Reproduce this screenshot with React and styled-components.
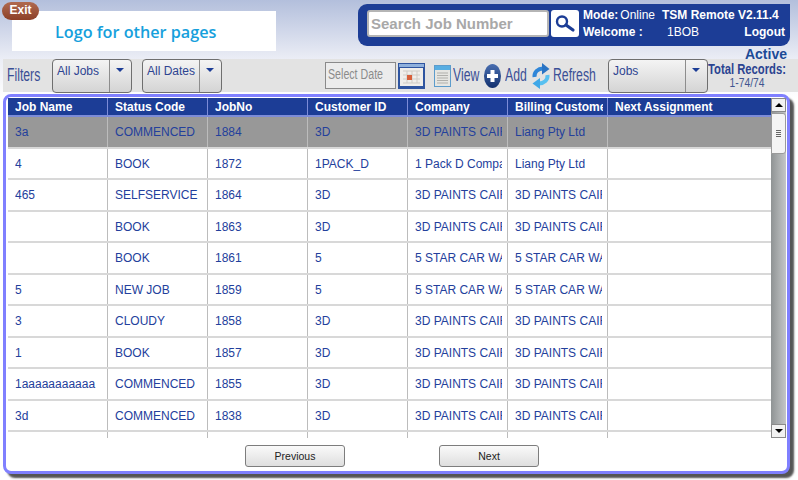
import React from 'react';
import styled, { createGlobalStyle } from 'styled-components';

const GlobalStyle = createGlobalStyle`
  html, body {
    margin: 0;
    padding: 0;
    width: 798px;
    height: 480px;
    overflow: hidden;
    background: #fff;
    font-family: "Liberation Sans", Arial, sans-serif;
  }
  * { box-sizing: border-box; }
`;

const Page = styled.div`
  position: relative;
  width: 798px;
  height: 480px;
  padding-top: 4px;
  background: linear-gradient(180deg, #b3bfdc 0%, #eceef6 60px, #fff 100px);
`;

const ExitBadge = styled.div`
  position: absolute;
  left: 2px;
  top: 2px;
  width: 37px;
  height: 18px;
  border-radius: 9px;
  background: linear-gradient(180deg, #b06a50, #8c4028);
  color: #fff;
  font-size: 12px;
  font-weight: 700;
  line-height: 17px;
  text-align: center;
`;

const TopBar = styled.div`
  display: flex;
  height: 55px;
  padding-right: 8px;
`;

const LogoBox = styled.div`
  width: 264px;
  height: 40px;
  margin: 7px 82px 0 12px;
  padding-left: 43px;
  background: #fff;
  color: #16a0dc;
  font-family: "Open Sans", sans-serif;
  font-size: 16.2px;
  font-weight: 600;
  line-height: 42px;
`;

const BluePanel = styled.div`
  display: flex;
  align-items: center;
  width: 432px;
  height: 42px;
  padding: 0 0 3px 9px;
  border-radius: 9px 0 9px 9px;
  background: #1c3d96;
  color: #fff;
`;

const SearchInput = styled.div`
  width: 182px;
  height: 27px;
  padding-left: 2px;
  border: 2px solid #b5b5b5;
  border-radius: 3px;
  background: #fff;
  color: #a8a8a8;
  font-size: 15px;
  font-weight: 700;
  line-height: 23px;
  white-space: nowrap;
`;

const SearchButton = styled.div`
  display: flex;
  align-items: center;
  justify-content: center;
  width: 28px;
  height: 27px;
  margin-left: 2px;
  border-radius: 3px;
  background: #fff;
`;

const InfoGrid = styled.div`
  display: grid;
  grid-template-columns: 79px 125px;
  grid-template-rows: 17px 17px;
  margin-left: 4px;
  font-size: 12px;
`;

const InfoCell = styled.div`
  display: flex;
  justify-content: ${p => (p.$between ? 'space-between' : 'flex-start')};
  align-items: center;
  gap: ${p => p.$gap || 0}px;
  font-weight: ${p => (p.$bold ? 700 : 400)};
  white-space: nowrap;
`;

const Light = styled.span`
  font-weight: 400;
  margin-left: ${p => p.$left || 0}px;
`;

const Strong = styled.span`
  font-weight: 700;
  margin-right: ${p => p.$right || 0}px;
`;

const FilterBar = styled.div`
  display: flex;
  align-items: center;
  height: 33px;
  margin-left: 3px;
  padding-left: 4px;
  background: #e3e3e3;
`;

// the original labels are a condensed face, squeezed here from Liberation Sans
const BarLabel = styled.span`
  flex: none;
  width: ${p => p.$width}px;
  margin-left: ${p => p.$left || 0}px;
  color: #3a4f96;
  font-size: 18px;
  white-space: nowrap;
  transform: scaleX(0.68);
  transform-origin: left center;
`;

const Dropdown = styled.div`
  display: flex;
  flex: none;
  width: ${p => p.$width}px;
  height: 34px;
  margin-left: ${p => p.$left}px;
  border: 1px solid #6f6f6f;
  border-radius: 4px;
  background: linear-gradient(180deg, #f4f4f4, #d4d4d4);
`;

const DropLabel = styled.div`
  flex: 1;
  padding: 4px 0 0 4px;
  border-right: 1px solid #8d8d8d;
  color: #2d4491;
  font-size: 12px;
  white-space: nowrap;
`;

const DropArrow = styled.div`
  width: 21px;
  padding: 8px 0 0 6px;
  &::after {
    content: '';
    display: block;
    width: 0;
    height: 0;
    border-left: 4px solid transparent;
    border-right: 4px solid transparent;
    border-top: 4px solid #1c3d96;
  }
`;

const DateInput = styled.div`
  flex: none;
  width: 71px;
  height: 27px;
  margin-left: 103px;
  padding-left: 2px;
  border: 1px solid #8a8a8a;
  background: #ececec;
`;

const DateText = styled.span`
  display: block;
  color: #8b8b8b;
  font-size: 14px;
  line-height: 23px;
  white-space: nowrap;
  transform: scaleX(0.76);
  transform-origin: left center;
`;

const IconSlot = styled.span`
  display: flex;
  flex: none;
  margin-left: ${p => p.$left || 0}px;
`;

const Totals = styled.div`
  position: relative;
  flex: none;
  width: 78px;
  line-height: 14px;
`;

const ActiveTag = styled.div`
  position: absolute;
  top: -15px;
  right: -1px;
  color: #1c4a96;
  font-size: 14px;
  font-weight: 700;
  line-height: 14px;
`;

const TotalLine = styled.div`
  display: flex;
  justify-content: center;
  color: ${p => (p.$muted ? '#41558f' : '#2b4491')};
  font-size: ${p => (p.$muted ? 13.5 : 15)}px;
  font-weight: ${p => (p.$muted ? 400 : 700)};
  white-space: nowrap;
  transform: scaleX(${p => (p.$muted ? 0.76 : 0.75)});
`;

const Card = styled.div`
  display: flex;
  flex-direction: column;
  width: 787px;
  height: 380px;
  margin: 2px 0 0 3px;
  padding: 1px 1px 0 2px;
  border: 3px solid #8080ff;
  border-radius: 8px;
  background: #fff;
  box-shadow: 4px 4px 2px #555;
`;

const TableWrap = styled.div`
  display: flex;
  height: 340px;
`;

const Table = styled.div`
  width: 764px;
  height: 340px;
  overflow: hidden;
`;

const Row = styled.div`
  display: grid;
  grid-template-columns: repeat(6, 100px) 164px;
  height: ${p => (p.$head ? 19 : 31.55)}px;
  background: ${p => (p.$head ? '#1c3d96' : p.$selected ? '#989898' : '#fff')};
  border-bottom: 2px solid ${p => (p.$head ? '#7c8cd8' : '#d8d8d8')};
`;

const Cell = styled.div`
  padding: ${p => (p.$head ? '2px 4px 0 7px' : '8px 5px 0 7px')};
  border-right: 1px solid ${p => (p.$head ? '#7c8cd8' : '#bcbcbc')};
  color: ${p => (p.$head ? '#fff' : '#23409c')};
  font-size: 12px;
  font-weight: ${p => (p.$head ? 700 : 400)};
  &:last-child { border-right: none; }
`;

const CellText = styled.div`
  overflow: hidden;
  white-space: nowrap;
`;

const ScrollBar = styled.div`
  display: flex;
  flex-direction: column;
  width: 15px;
  height: 340px;
  background: linear-gradient(90deg, #8f9394, #c4c6c7);
`;

const ScrollButton = styled.div`
  display: flex;
  align-items: center;
  justify-content: center;
  height: 14px;
  background: #f2f2f2;
  border: 1px solid #8a8a8a;
  &::after {
    content: '';
    border-left: 4px solid transparent;
    border-right: 4px solid transparent;
    ${p => (p.$up ? 'border-bottom: 4px solid #000;' : 'border-top: 4px solid #000;')}
  }
`;

const ScrollThumb = styled.div`
  display: flex;
  flex-direction: column;
  align-items: center;
  justify-content: center;
  gap: 1px;
  height: 41px;
  margin: 1px 0 auto;
  border: 1px solid #9a9a9a;
  border-radius: 0 3px 3px 0;
  background: #f4f4f4;
`;

const Grip = styled.i`
  display: block;
  width: 5px;
  height: 1px;
  background: #666;
`;

const Pager = styled.div`
  display: flex;
  gap: 94px;
  padding: 7px 0 0 237px;
`;

const PageButton = styled.div`
  width: 100px;
  height: 22px;
  border: 1px solid #7d7d7d;
  border-radius: 3px;
  background: linear-gradient(180deg, #fafafa, #dedede);
  color: #222;
  font-size: 10.5px;
  line-height: 20px;
  text-align: center;
`;

const columns = ['Job Name', 'Status Code', 'JobNo', 'Customer ID', 'Company', 'Billing Customer', 'Next Assignment'];

const rows = [
  ['3a', 'COMMENCED', '1884', '3D', '3D PAINTS CAIRNS', 'Liang Pty Ltd'],
  ['4', 'BOOK', '1872', '1PACK_D', '1 Pack D Company', 'Liang Pty Ltd'],
  ['465', 'SELFSERVICE', '1864', '3D', '3D PAINTS CAIRNS', '3D PAINTS CAIRNS'],
  ['', 'BOOK', '1863', '3D', '3D PAINTS CAIRNS', '3D PAINTS CAIRNS'],
  ['', 'BOOK', '1861', '5', '5 STAR CAR WASH', '5 STAR CAR WASH'],
  ['5', 'NEW JOB', '1859', '5', '5 STAR CAR WASH', '5 STAR CAR WASH'],
  ['3', 'CLOUDY', '1858', '3D', '3D PAINTS CAIRNS', '3D PAINTS CAIRNS'],
  ['1', 'BOOK', '1857', '3D', '3D PAINTS CAIRNS', '3D PAINTS CAIRNS'],
  ['1aaaaaaaaaaa', 'COMMENCED', '1855', '3D', '3D PAINTS CAIRNS', '3D PAINTS CAIRNS'],
  ['3d', 'COMMENCED', '1838', '3D', '3D PAINTS CAIRNS', '3D PAINTS CAIRNS'],
  ['', '', '', '', '', ''],
];

const SearchIcon = () => (
  <svg width="22" height="20" viewBox="0 0 22 20">
    <circle cx="8" cy="7.5" r="5" fill="none" stroke="#1c3d96" strokeWidth="2.4" />
    <path d="M12 11l7 5" stroke="#1c3d96" strokeWidth="3.2" strokeLinecap="round" />
  </svg>
);

const CalendarIcon = () => (
  <svg width="27" height="26" viewBox="0 0 27 26">
    <rect width="27" height="26" fill="#2f55a0" />
    <rect x="1" y="1" width="25" height="3" fill="#8fb0dc" />
    <rect x="2" y="5" width="23" height="18" fill="#f0eeea" />
    <path d="M5 8h17M5 12h17M5 16h17M5 20h17M9 8v12M14 8v12M19 8v12" stroke="#cfccc6" />
    <rect x="9" y="12" width="5" height="5" fill="#d8603a" />
  </svg>
);

const ViewIcon = () => (
  <svg width="17" height="22" viewBox="0 0 17 22">
    <rect x="0.5" y="0.5" width="16" height="21" fill="#e6e6e2" stroke="#5c9ccc" />
    <rect x="1" y="1" width="15" height="4" fill="#58aee2" />
    <path d="M3 8h11M3 10.5h11M3 13h11M3 15.5h11M3 18h11" stroke="#b0b0ac" strokeWidth="1.2" />
  </svg>
);

const AddIcon = () => (
  <svg width="17" height="24" viewBox="0 0 17 24">
    <defs>
      <linearGradient id="addFill" x1="0" y1="0" x2="0" y2="1">
        <stop offset="0" stopColor="#4a6fb0" />
        <stop offset="1" stopColor="#12306e" />
      </linearGradient>
    </defs>
    <ellipse cx="8.5" cy="12" rx="8.5" ry="12" fill="url(#addFill)" />
    <path d="M8.5 6v12M3 12h11" stroke="#fff" strokeWidth="4" />
  </svg>
);

const RefreshIcon = () => (
  <svg width="20" height="26" viewBox="0 0 20 26">
    <path d="M3.5 14C3 9 7 5.5 12 5.5" fill="none" stroke="#2f86d8" strokeWidth="4" />
    <path d="M11 0l7.5 6L11 11.5z" fill="#2a74c4" />
    <path d="M16.5 12c.5 5-3.5 8.5-8.5 8.5" fill="none" stroke="#58c0f0" strokeWidth="4" />
    <path d="M9 15L1.5 20.5 9 26z" fill="#3fa8e8" />
  </svg>
);

export default function App() {
  return (
    <Page>
      <GlobalStyle />
      <ExitBadge>Exit</ExitBadge>
      <TopBar>
        <LogoBox>Logo for other pages</LogoBox>
        <BluePanel>
          <SearchInput>Search Job Number</SearchInput>
          <SearchButton><SearchIcon /></SearchButton>
          <InfoGrid>
            <InfoCell $gap={2}><Strong>Mode:</Strong><Light>Online</Light></InfoCell>
            <InfoCell $bold>TSM Remote V2.11.4</InfoCell>
            <InfoCell $bold>Welcome :</InfoCell>
            <InfoCell $between>
              <Light $left={5}>1BOB</Light>
              <Strong $right={2}>Logout</Strong>
            </InfoCell>
          </InfoGrid>
        </BluePanel>
      </TopBar>
      <FilterBar>
        <BarLabel $width={33}>Filters</BarLabel>
        <Dropdown $width={80} $left={12}>
          <DropLabel>All Jobs</DropLabel>
          <DropArrow />
        </Dropdown>
        <Dropdown $width={80} $left={10}>
          <DropLabel>All Dates</DropLabel>
          <DropArrow />
        </Dropdown>
        <DateInput><DateText>Select Date</DateText></DateInput>
        <IconSlot $left={2}><CalendarIcon /></IconSlot>
        <IconSlot $left={9}><ViewIcon /></IconSlot>
        <BarLabel $width={27} $left={2}>View</BarLabel>
        <IconSlot $left={4}><AddIcon /></IconSlot>
        <BarLabel $width={22} $left={4}>Add</BarLabel>
        <IconSlot $left={4}><RefreshIcon /></IconSlot>
        <BarLabel $width={43} $left={2}>Refresh</BarLabel>
        <Dropdown $width={100} $left={12}>
          <DropLabel>Jobs</DropLabel>
          <DropArrow />
        </Dropdown>
        <Totals>
          <ActiveTag>Active</ActiveTag>
          <TotalLine>Total Records:</TotalLine>
          <TotalLine $muted>1-74/74</TotalLine>
        </Totals>
      </FilterBar>
      <Card>
        <TableWrap>
          <Table>
            <Row $head>
              {columns.map(c => <Cell $head key={c}><CellText>{c}</CellText></Cell>)}
            </Row>
            {rows.map((r, i) => (
              <Row key={i} $selected={i === 0}>
                {r.map((v, j) => <Cell key={j}><CellText>{v}</CellText></Cell>)}
                <Cell />
              </Row>
            ))}
          </Table>
          <ScrollBar>
            <ScrollButton $up />
            <ScrollThumb>
              <Grip /><Grip /><Grip /><Grip />
            </ScrollThumb>
            <ScrollButton />
          </ScrollBar>
        </TableWrap>
        <Pager>
          <PageButton>Previous</PageButton>
          <PageButton>Next</PageButton>
        </Pager>
      </Card>
    </Page>
  );
}
